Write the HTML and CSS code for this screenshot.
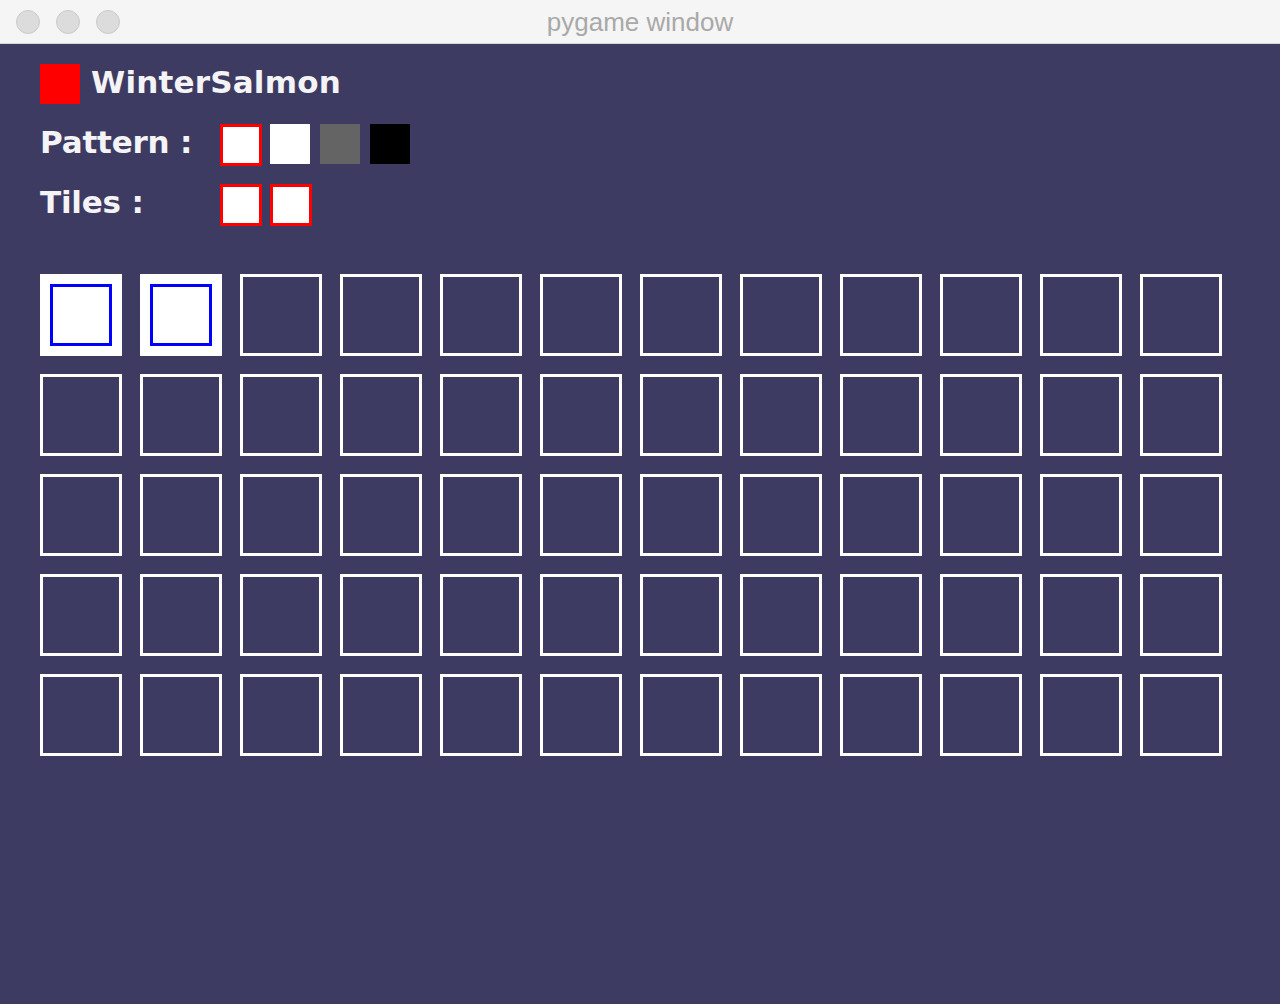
FILE: index.html
```html
<!DOCTYPE html>
<html>
<head>
<meta charset="utf-8">
<link rel="stylesheet" href="styles.css">
</head>
<body>
<div class="window">
  <div class="titlebar">
    <div class="lights">
      <span class="light"></span><span class="light"></span><span class="light"></span>
    </div>
    <div class="title">pygame window</div>
  </div>
  <div class="content">
    <div class="row">
      <span class="color-box"></span>
      <span class="name">WinterSalmon</span>
    </div>
    <div class="row">
      <span class="label">Pattern :</span>
      <div class="swatches">
        <span class="swatch white selected"></span>
        <span class="swatch white"></span>
        <span class="swatch gray"></span>
        <span class="swatch black"></span>
      </div>
    </div>
    <div class="row">
      <span class="label">Tiles :</span>
      <div class="swatches">
        <span class="swatch white selected"></span>
        <span class="swatch white selected"></span>
      </div>
    </div>
    <div class="grid" id="grid">
      <div class="tile filled"><div class="inner"></div></div>
      <div class="tile filled"><div class="inner"></div></div>
      <div class="tile"></div><div class="tile"></div><div class="tile"></div><div class="tile"></div><div class="tile"></div><div class="tile"></div><div class="tile"></div><div class="tile"></div><div class="tile"></div><div class="tile"></div>
      <div class="tile"></div><div class="tile"></div><div class="tile"></div><div class="tile"></div><div class="tile"></div><div class="tile"></div><div class="tile"></div><div class="tile"></div><div class="tile"></div><div class="tile"></div><div class="tile"></div><div class="tile"></div>
      <div class="tile"></div><div class="tile"></div><div class="tile"></div><div class="tile"></div><div class="tile"></div><div class="tile"></div><div class="tile"></div><div class="tile"></div><div class="tile"></div><div class="tile"></div><div class="tile"></div><div class="tile"></div>
      <div class="tile"></div><div class="tile"></div><div class="tile"></div><div class="tile"></div><div class="tile"></div><div class="tile"></div><div class="tile"></div><div class="tile"></div><div class="tile"></div><div class="tile"></div><div class="tile"></div><div class="tile"></div>
      <div class="tile"></div><div class="tile"></div><div class="tile"></div><div class="tile"></div><div class="tile"></div><div class="tile"></div><div class="tile"></div><div class="tile"></div><div class="tile"></div><div class="tile"></div><div class="tile"></div><div class="tile"></div>
    </div>
  </div>
</div>
</body>
</html>
```

FILE: styles.css
```css
html, body {
  margin: 0;
  padding: 0;
  background: #3d3b62;
}
.window {
  width: 1280px;
  height: 1004px;
  display: flex;
  flex-direction: column;
  font-family: "DejaVu Sans", "Liberation Sans", sans-serif;
}
.titlebar {
  height: 43px;
  flex: none;
  background: #f5f5f5;
  border-bottom: 1px solid #d8d8d8;
  position: relative;
  display: flex;
  align-items: center;
  justify-content: center;
}
.lights {
  position: absolute;
  left: 16px;
  top: 10px;
  display: flex;
  gap: 16px;
}
.light {
  width: 22px;
  height: 22px;
  border-radius: 50%;
  background: #dcdcdc;
  border: 1px solid #cbcbcb;
}
.title {
  font-family: "Liberation Sans", Arial, sans-serif;
  font-size: 26px;
  color: #a9a9a9;
  margin-top: 1px;
}
.content {
  flex: 1;
  background: #3d3b62;
  padding: 20px 0 0 40px;
}
.row {
  display: flex;
  align-items: center;
  height: 40px;
  margin-bottom: 20px;
}
.color-box {
  width: 40px;
  height: 40px;
  background: #ff0000;
  margin-right: 11px;
}
.name, .label {
  color: #f4f4f6;
  font-weight: bold;
  font-size: 31px;
  letter-spacing: 0.2px;
  line-height: 40px;
  margin-top: -4px;
}
.label {
  width: 180px;
  letter-spacing: -0.2px;
}
.swatches {
  display: flex;
  align-items: flex-start;
  height: 40px;
}
.swatch {
  box-sizing: border-box;
  width: 40px;
  height: 40px;
  margin-right: 10px;
}
.swatch.selected {
  width: 42px;
  height: 42px;
  border: 3px solid #ff0000;
  margin-right: 8px;
}
.white { background: #ffffff; }
.gray { background: #646464; }
.black { background: #000000; }
.grid {
  margin-top: 50px;
  display: grid;
  grid-template-columns: repeat(12, 82px);
  grid-auto-rows: 82px;
  gap: 18px;
}
.tile {
  box-sizing: border-box;
  border: 3px solid #ffffff;
}
.tile.filled {
  background: #ffffff;
  display: flex;
  align-items: center;
  justify-content: center;
}
.inner {
  box-sizing: border-box;
  width: 62px;
  height: 62px;
  border: 3px solid #0000ff;
  background: #ffffff;
}
```
